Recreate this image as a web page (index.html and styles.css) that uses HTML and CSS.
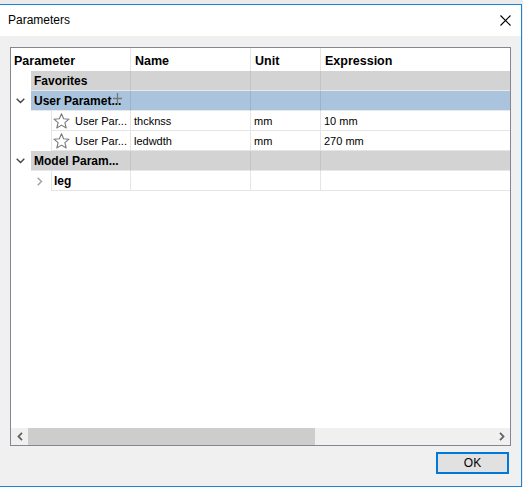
FILE: index.html
```html
<!DOCTYPE html>
<html lang="en">
<head>
<meta charset="utf-8">
<title>Parameters</title>
<link rel="stylesheet" href="styles.css">
</head>
<body>
<div class="window">
    <div class="titlebar">
        <span class="title">Parameters</span>
        <svg class="close" width="11" height="11" viewBox="0 0 11 11"><path d="M0.5 0.5L10.5 10.5M10.5 0.5L0.5 10.5" stroke="#000" stroke-width="1.1" fill="none"/></svg>
    </div>
    <div class="content">
        <div class="frame">
            <div class="tree">
                <div class="row head">
                    <div class="cell c1">Parameter</div>
                    <div class="cell">Name</div>
                    <div class="cell">Unit</div>
                    <div class="cell last">Expression</div>
                </div>
                <div class="row group l1">
                    <div class="indent"></div>
                    <div class="cell bold">Favorites</div>
                    <div class="cell"></div>
                    <div class="cell"></div>
                    <div class="cell last"></div>
                </div>
                <div class="row group selected l1">
                    <div class="indent"><svg class="chev" width="9" height="6" viewBox="0 0 9 6"><path d="M0.7 0.7L4.5 4.5L8.3 0.7" stroke="#444" stroke-width="1.4" fill="none"/></svg></div>
                    <div class="cell bold">User Paramet...<svg class="cursor" width="9" height="11" viewBox="0 0 9 11"><path d="M4.5 0V11M0 5.5H9" stroke="#777" stroke-width="1.3"/></svg></div>
                    <div class="cell"></div>
                    <div class="cell"></div>
                    <div class="cell last"></div>
                </div>
                <div class="row item l2">
                    <div class="indent"></div>
                    <div class="cell first"><svg class="star" width="17" height="16" viewBox="0 0 17 16"><path d="M8.5 0.8L10.6 5.8L16 6.2L11.9 9.7L13.2 15L8.5 12.1L3.8 15L5.1 9.7L1 6.2L6.4 5.8Z" stroke="#7a7a7a" stroke-width="1.1" fill="#fff" stroke-linejoin="round"/></svg>User Par...</div>
                    <div class="cell">thcknss</div>
                    <div class="cell">mm</div>
                    <div class="cell last">10 mm</div>
                </div>
                <div class="row item l2">
                    <div class="indent"></div>
                    <div class="cell first"><svg class="star" width="17" height="16" viewBox="0 0 17 16"><path d="M8.5 0.8L10.6 5.8L16 6.2L11.9 9.7L13.2 15L8.5 12.1L3.8 15L5.1 9.7L1 6.2L6.4 5.8Z" stroke="#7a7a7a" stroke-width="1.1" fill="#fff" stroke-linejoin="round"/></svg>User Par...</div>
                    <div class="cell">ledwdth</div>
                    <div class="cell">mm</div>
                    <div class="cell last">270 mm</div>
                </div>
                <div class="row group l1">
                    <div class="indent"><svg class="chev" width="9" height="6" viewBox="0 0 9 6"><path d="M0.7 0.7L4.5 4.5L8.3 0.7" stroke="#444" stroke-width="1.4" fill="none"/></svg></div>
                    <div class="cell bold">Model Param...</div>
                    <div class="cell"></div>
                    <div class="cell"></div>
                    <div class="cell last"></div>
                </div>
                <div class="row item l2">
                    <div class="indent"><svg class="chev-right" width="6" height="9" viewBox="0 0 6 9"><path d="M0.7 0.7L4.5 4.5L0.7 8.3" stroke="#a0a0a0" stroke-width="1.4" fill="none"/></svg></div>
                    <div class="cell first bold">leg</div>
                    <div class="cell"></div>
                    <div class="cell"></div>
                    <div class="cell last"></div>
                </div>
            </div>
            <div class="hscroll">
                <div class="arrow"><svg width="6" height="9" viewBox="0 0 6 9"><path d="M5 0.8L1.5 4.5L5 8.2" stroke="#606060" stroke-width="1.8" fill="none"/></svg></div>
                <div class="track"><div class="thumb"></div></div>
                <div class="arrow"><svg width="6" height="9" viewBox="0 0 6 9"><path d="M1 0.8L4.5 4.5L1 8.2" stroke="#606060" stroke-width="1.8" fill="none"/></svg></div>
            </div>
        </div>
        <div class="buttons">
            <button class="ok">OK</button>
        </div>
    </div>
</div>
</body>
</html>
```

FILE: styles.css
```css
* {
    margin: 0;
    padding: 0;
    box-sizing: border-box;
}
body {
    background-color: #ebebeb;
    font-family: "Liberation Sans", Arial, sans-serif;
    font-size: 11px;
    color: #000;
    padding-top: 4px;
}
.window {
    width: 522px;
    height: 483px;
    border-top: 1px solid #1883d7;
    border-right: 1px solid #1883d7;
    border-bottom: 1px solid #1883d7;
    display: flex;
    flex-direction: column;
}
.titlebar {
    height: 31px;
    background-color: #fff;
    display: flex;
    align-items: center;
    justify-content: space-between;
    padding-left: 8px;
    padding-right: 10px;
}
.title {
    font-size: 12px;
    padding-bottom: 1px;
}
.close {
    display: block;
}
.content {
    flex: 1;
    background-color: #f0f0f0;
    padding: 11px 11px 0 10px;
}
.frame {
    width: 501px;
    height: 399px;
    border: 1px solid #828790;
    background-color: #fff;
    display: flex;
    flex-direction: column;
}
.tree {
    flex: 1;
}
/* rows */
.row {
    --indent: 0px;
    display: grid;
    grid-template-columns: var(--indent) calc(120px - var(--indent)) 120px 70px 1fr;
    height: 20px;
}
.row.l1 { --indent: 20px; }
.row.l2 { --indent: 40px; }
.row.head {
    grid-template-columns: 120px 120px 70px 1fr;
    height: 23px;
    font-weight: bold;
    font-size: 12.5px;
}
.head .cell {
    border-right: 1px solid #e5e5e5;
    border-bottom: 0;
    padding-left: 4px;
    padding-top: 3px;
}
.head .c1 {
    padding-left: 3px;
}
.cell {
    border-right: 1px solid #e5e5e5;
    border-bottom: 1px solid #e5e5e5;
    padding-left: 3px;
    white-space: nowrap;
    overflow: hidden;
    display: flex;
    align-items: center;
    position: relative;
}
.cell.last {
    border-right: 0;
}
.bold {
    font-weight: bold;
    font-size: 12px;
}
.indent {
    display: flex;
    align-items: center;
    justify-content: center;
    padding-right: 2px;
}
.l2 .indent {
    justify-content: flex-end;
    padding-right: 8px;
}
.chev, .chev-right {
    display: block;
}
.group .cell {
    background-color: #d3d3d3;
    border-right-color: #c4c4c4;
    border-bottom-color: #e8e8e8;
}
.group.selected .cell {
    background-color: #a9c4dc;
    border-right-color: #98b4cc;
}
.item .cell.first {
    border-left: 1px solid #e5e5e5;
    padding-left: 1px;
}
.item .cell.bold {
    padding-left: 2px;
}
.star {
    display: block;
    margin-right: 5px;
    flex-shrink: 0;
}
.cursor {
    position: absolute;
    left: 82px;
    top: 2px;
}
/* horizontal scrollbar */
.hscroll {
    height: 17px;
    display: flex;
    background-color: #f0f0f0;
}
.hscroll .arrow {
    width: 17px;
    display: flex;
    align-items: center;
    justify-content: center;
}
.hscroll .track {
    flex: 1;
}
.hscroll .thumb {
    width: 287px;
    height: 100%;
    background-color: #cdcdcd;
}
.buttons {
    display: flex;
    justify-content: flex-end;
    padding-top: 6px;
    padding-right: 1px;
}
.ok {
    width: 73px;
    height: 22px;
    border: 2px solid #0078d7;
    background-color: #e1e1e1;
    font-family: "Liberation Sans", Arial, sans-serif;
    font-size: 12px;
    color: #000;
}
```
